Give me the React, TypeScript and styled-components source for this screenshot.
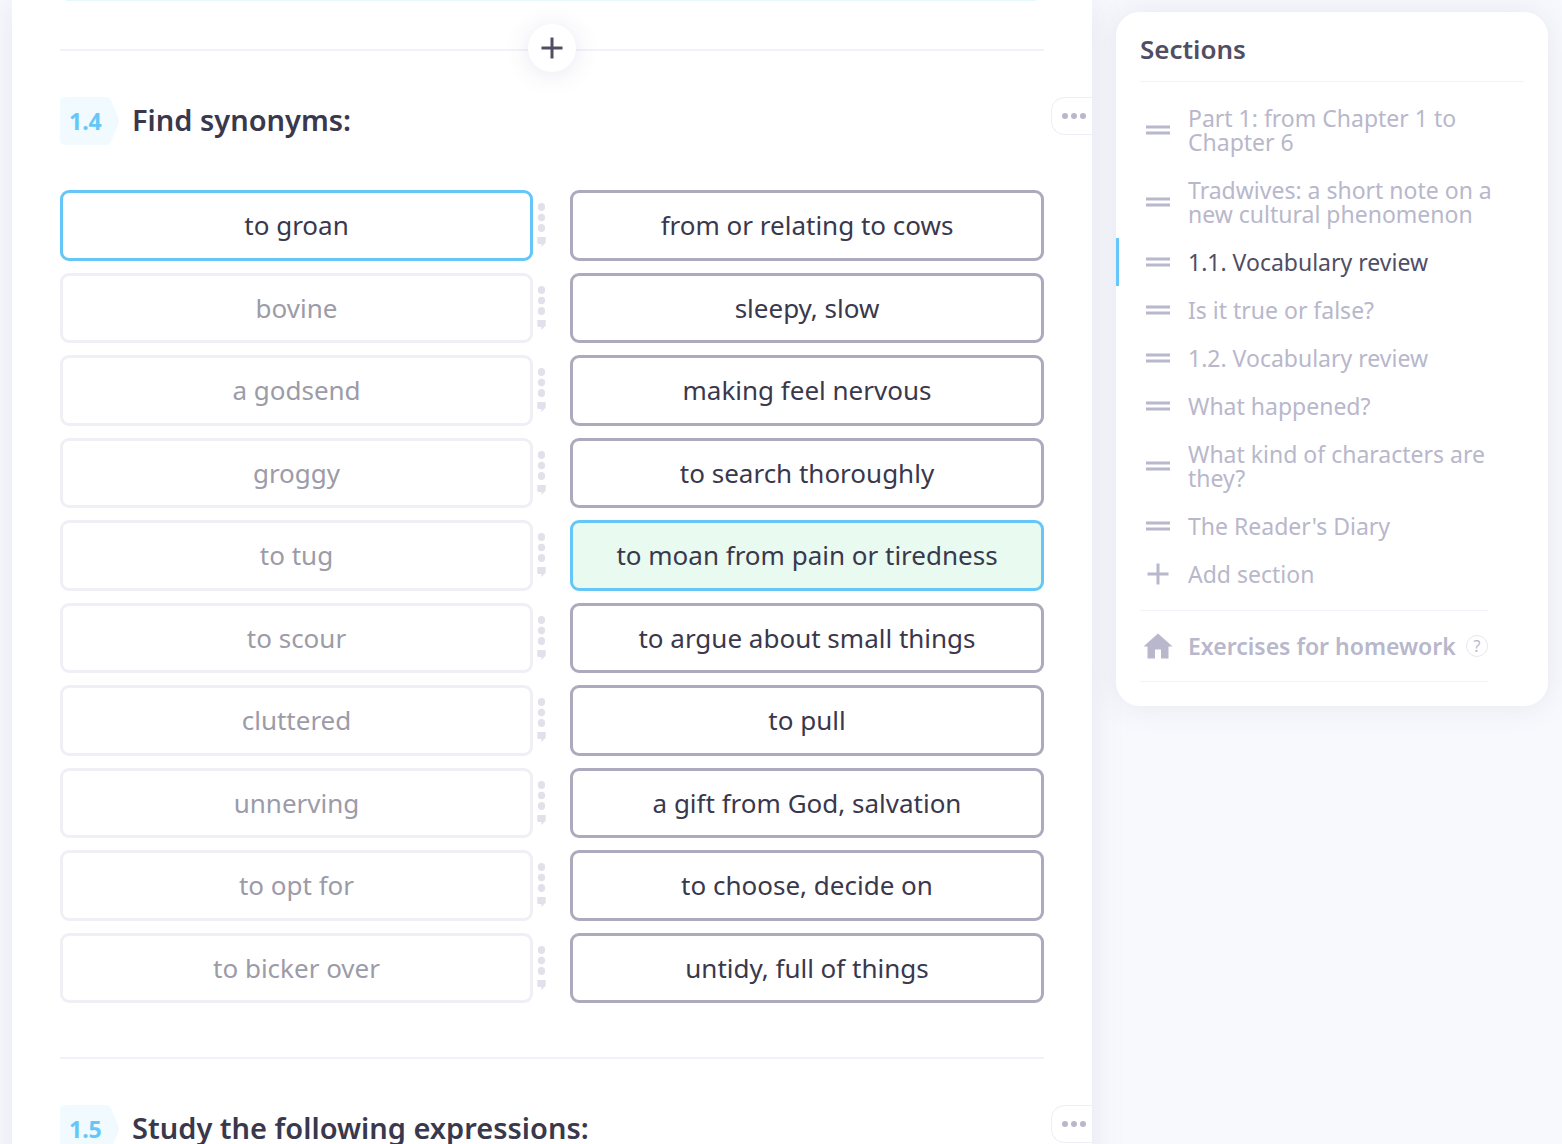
import React from "react";
import styled, { createGlobalStyle, css } from "styled-components";

const color = {
  page: "#f8f9fd",
  ink: "#3a384c",
  heading: "#504e64",
  muted: "#b8b7cb",
  border: "#adaabe",
  line: "#f3f2f8",
  accent: "#65c7f7",
};

const GlobalStyle = createGlobalStyle`
  *, *::before, *::after { box-sizing: border-box; }
  body {
    margin: 0;
    background: ${color.page};
    color: ${color.ink};
    font-family: "Noto Sans", "Open Sans", sans-serif;
  }
  button { font-family: inherit; cursor: pointer; }
`;

const Page = styled.div`
  display: flex;
  align-items: flex-start;
  gap: 24px;
  height: 100vh;
  padding: 0 14px 0 12px;
  overflow-y: auto;
  scrollbar-width: none;
`;

const Lesson = styled.main`
  flex: 1;
  min-width: 0;
  padding: 0 48px 48px;
  overflow-x: clip;
  background: #fff;
  box-shadow: 0 0 32px rgba(80, 74, 130, 0.1);
`;

const PreviousEdge = styled.div`
  height: 1px;
  margin: 0 8px 48px 6px;
  background: #e6f7fe;
`;

const Exercise = styled.section`
  position: relative;
  padding: 46px 0 54px;
  border-top: 2px solid ${color.line};
`;

const AddButton = styled.button`
  position: absolute;
  top: -27px;
  left: calc(50% - 24px);
  display: grid;
  place-items: center;
  width: 48px;
  height: 48px;
  padding: 0;
  border: 0;
  border-radius: 50%;
  background: #fff;
  color: ${color.heading};
  box-shadow: 0 2px 24px rgba(80, 70, 140, 0.13);
`;

const ExerciseHeader = styled.header`
  display: flex;
  align-items: flex-start;
  margin-right: -48px;
`;

const Badge = styled.span`
  position: relative;
  display: flex;
  align-items: center;
  width: 60px;
  height: 48px;
  padding-left: 9px;
  color: ${color.accent};
  font-size: 23px;
  font-weight: 700;
  line-height: 48px;

  svg {
    position: absolute;
    inset: 0;
  }
  span { position: relative; }
`;

const Title = styled.h2`
  flex: 1;
  margin: 0 0 0 12px;
  font-size: 29px;
  font-weight: 600;
  line-height: 46px;
`;

const MoreButton = styled.button`
  display: flex;
  align-items: center;
  width: 41px;
  height: 38px;
  padding: 0 0 0 10px;
  border: 1px solid #efeef6;
  border-right: 0;
  border-radius: 14px 0 0 14px;
  background: #fff;
  color: ${color.muted};
`;

const Pairs = styled.div`
  display: grid;
  gap: 12px;
  grid-auto-rows: 1fr;
  min-height: 813px;
  margin-top: 45px;
`;

const Pair = styled.div`
  display: grid;
  grid-template-columns: calc(50% - 19px) 37px 1fr;
`;

type Tone = "plain" | "faded" | "active" | "match";

const tones = {
  plain: css`
    border-color: ${color.border};
  `,
  faded: css`
    border-color: #f0eff5;
    color: #9c9ba8;
  `,
  active: css`
    border-color: ${color.accent};
  `,
  match: css`
    border-color: ${color.accent};
    background: #e9faf1;
  `,
};

const Card = styled.button<{ $tone: Tone }>`
  padding: 0 12px;
  border: 3px solid;
  border-radius: 9px;
  background: #fff;
  color: ${color.ink};
  font-size: 26px;
  line-height: 40px;
  text-align: center;
  ${(p) => tones[p.$tone]}
`;

const Connector = styled.span`
  padding: 13px 0 0 4px;
  color: #e1e0eb;
  line-height: 0;
`;

const Sidebar = styled.aside`
  flex: 0 0 432px;
  margin-top: 12px;
  padding: 0 24px 24px;
  border-radius: 24px;
  background: #fff;
  box-shadow: 0 0 32px rgba(80, 74, 130, 0.1);
`;

const SidebarTitle = styled.h2`
  margin: 0;
  padding: 13px 0 8px;
  border-bottom: 1px solid ${color.line};
  color: ${color.heading};
  font-size: 26px;
  font-weight: 600;
  line-height: 48px;
`;

const SectionList = styled.ul`
  margin: 12px -24px;
  padding: 0;
  list-style: none;
`;

const rowStyle = css`
  display: flex;
  align-items: center;
  gap: 12px;
  width: 100%;
  border: 0;
  background: none;
  color: ${color.muted};
  font-size: 23px;
  line-height: 24px;
  text-align: left;
  text-decoration: none;
`;

const SectionLink = styled.a<{ $current?: boolean }>`
  ${rowStyle}
  padding: 12px 48px 12px 24px;
  ${(p) =>
    p.$current &&
    css`
      padding-left: 21px;
      border-left: 3px solid ${color.accent};
      color: ${color.heading};
    `}
`;

const AddSection = styled.button`
  ${rowStyle}
  padding: 12px 48px 12px 24px;
`;

const IconSlot = styled.span`
  display: grid;
  flex: 0 0 36px;
  place-items: center;
  color: ${color.muted};
`;

const Homework = styled.div`
  display: flex;
  align-items: center;
  justify-content: space-between;
  margin-right: 36px;
  border: solid ${color.line};
  border-width: 1px 0;
`;

const HomeworkLink = styled.a`
  ${rowStyle}
  width: auto;
  padding: 22px 0;
  font-weight: 600;
  white-space: nowrap;
`;

const HelpButton = styled.button`
  width: 22px;
  height: 22px;
  padding: 0;
  border: 1px solid #e8e7f1;
  border-radius: 50%;
  background: #fff;
  color: ${color.muted};
  font-size: 16px;
  line-height: 20px;
`;

const PlusIcon = ({ weight }: { weight: number }) => (
  <svg width="22" height="22" viewBox="0 0 22 22" stroke="currentColor" strokeWidth={weight} aria-hidden="true">
    <path d="M11 0.5v21M0.5 11h21" />
  </svg>
);

const MoreIcon = () => (
  <svg width="24" height="6" viewBox="0 0 24 6" fill="currentColor" aria-hidden="true">
    <circle cx="3" cy="3" r="3" />
    <circle cx="12" cy="3" r="3" />
    <circle cx="21" cy="3" r="3" />
  </svg>
);

const ConnectorIcon = () => (
  <svg width="9" height="45" viewBox="0 0 9 45" fill="currentColor" aria-hidden="true">
    <ellipse cx="4.5" cy="4" rx="3.6" ry="3.9" />
    <ellipse cx="4.5" cy="14.5" rx="3.6" ry="3.7" />
    <ellipse cx="4.5" cy="25" rx="3.6" ry="3.9" />
    <path d="M0.3 34h8.4v5.5q0 1.3-1.3 1.3L4.4 44.3v-3.2H1.8Q0.3 41 0.3 39.5z" />
  </svg>
);

const DragIcon = () => (
  <svg width="24" height="10" viewBox="0 0 24 10" fill="currentColor" aria-hidden="true">
    <path d="M0 0.5h24v3H0zM0 6.5h24v3H0z" />
  </svg>
);

const HomeIcon = () => (
  <svg width="30" height="26" viewBox="0 0 30 26" fill="currentColor" aria-hidden="true">
    <path d="M15 0.5 29.5 13.5H25.5V25.5H18V16.5H12V25.5H4.5V13.5H0.5z" />
  </svg>
);

const NumberBadge = ({ children }: { children: string }) => (
  <Badge>
    <svg width="60" height="48" viewBox="0 0 60 48" fill="#f1faff" aria-hidden="true">
      <path d="M6 0H46Q49 0 51 3.5L58.3 20.5Q59.7 24 58.3 27.5L51 44.5Q49 48 46 48H6Q0 48 0 42V6Q0 0 6 0z" />
    </svg>
    <span>{children}</span>
  </Badge>
);

const ExerciseHeading = ({ number, title }: { number: string; title: string }) => (
  <ExerciseHeader>
    <NumberBadge>{number}</NumberBadge>
    <Title>{title}</Title>
    <MoreButton type="button" aria-label="More actions">
      <MoreIcon />
    </MoreButton>
  </ExerciseHeader>
);

const pairs: { left: string; right: string; leftTone?: Tone; rightTone?: Tone }[] = [
  { left: "to groan", right: "from or relating to cows", leftTone: "active" },
  { left: "bovine", right: "sleepy, slow" },
  { left: "a godsend", right: "making feel nervous" },
  { left: "groggy", right: "to search thoroughly" },
  { left: "to tug", right: "to moan from pain or tiredness", rightTone: "match" },
  { left: "to scour", right: "to argue about small things" },
  { left: "cluttered", right: "to pull" },
  { left: "unnerving", right: "a gift from God, salvation" },
  { left: "to opt for", right: "to choose, decide on" },
  { left: "to bicker over", right: "untidy, full of things" },
];

const sections = [
  "Part 1: from Chapter 1 to Chapter 6",
  "Tradwives: a short note on a new cultural phenomenon",
  "1.1. Vocabulary review",
  "Is it true or false?",
  "1.2. Vocabulary review",
  "What happened?",
  "What kind of characters are they?",
  "The Reader's Diary",
];
const currentSection = 2;

export default function App() {
  return (
    <>
      <GlobalStyle />
      <Page>
        <Lesson>
          <PreviousEdge />
          <Exercise>
            <AddButton type="button" aria-label="Add exercise">
              <PlusIcon weight={3} />
            </AddButton>
            <ExerciseHeading number="1.4" title="Find synonyms:" />
            <Pairs>
              {pairs.map((p) => (
                <Pair key={p.left}>
                  <Card type="button" $tone={p.leftTone ?? "faded"}>
                    {p.left}
                  </Card>
                  <Connector>
                    <ConnectorIcon />
                  </Connector>
                  <Card type="button" $tone={p.rightTone ?? "plain"}>
                    {p.right}
                  </Card>
                </Pair>
              ))}
            </Pairs>
          </Exercise>
          <Exercise>
            <ExerciseHeading number="1.5" title="Study the following expressions:" />
          </Exercise>
        </Lesson>
        <Sidebar>
          <SidebarTitle>Sections</SidebarTitle>
          <SectionList>
            {sections.map((name, i) => (
              <li key={name}>
                <SectionLink href="#" $current={i === currentSection}>
                  <IconSlot>
                    <DragIcon />
                  </IconSlot>
                  <span>{name}</span>
                </SectionLink>
              </li>
            ))}
            <li>
              <AddSection type="button">
                <IconSlot>
                  <PlusIcon weight={3} />
                </IconSlot>
                <span>Add section</span>
              </AddSection>
            </li>
          </SectionList>
          <Homework>
            <HomeworkLink href="#">
              <IconSlot>
                <HomeIcon />
              </IconSlot>
              <span>Exercises for homework</span>
            </HomeworkLink>
            <HelpButton type="button" aria-label="About homework">
              ?
            </HelpButton>
          </Homework>
        </Sidebar>
      </Page>
    </>
  );
}
